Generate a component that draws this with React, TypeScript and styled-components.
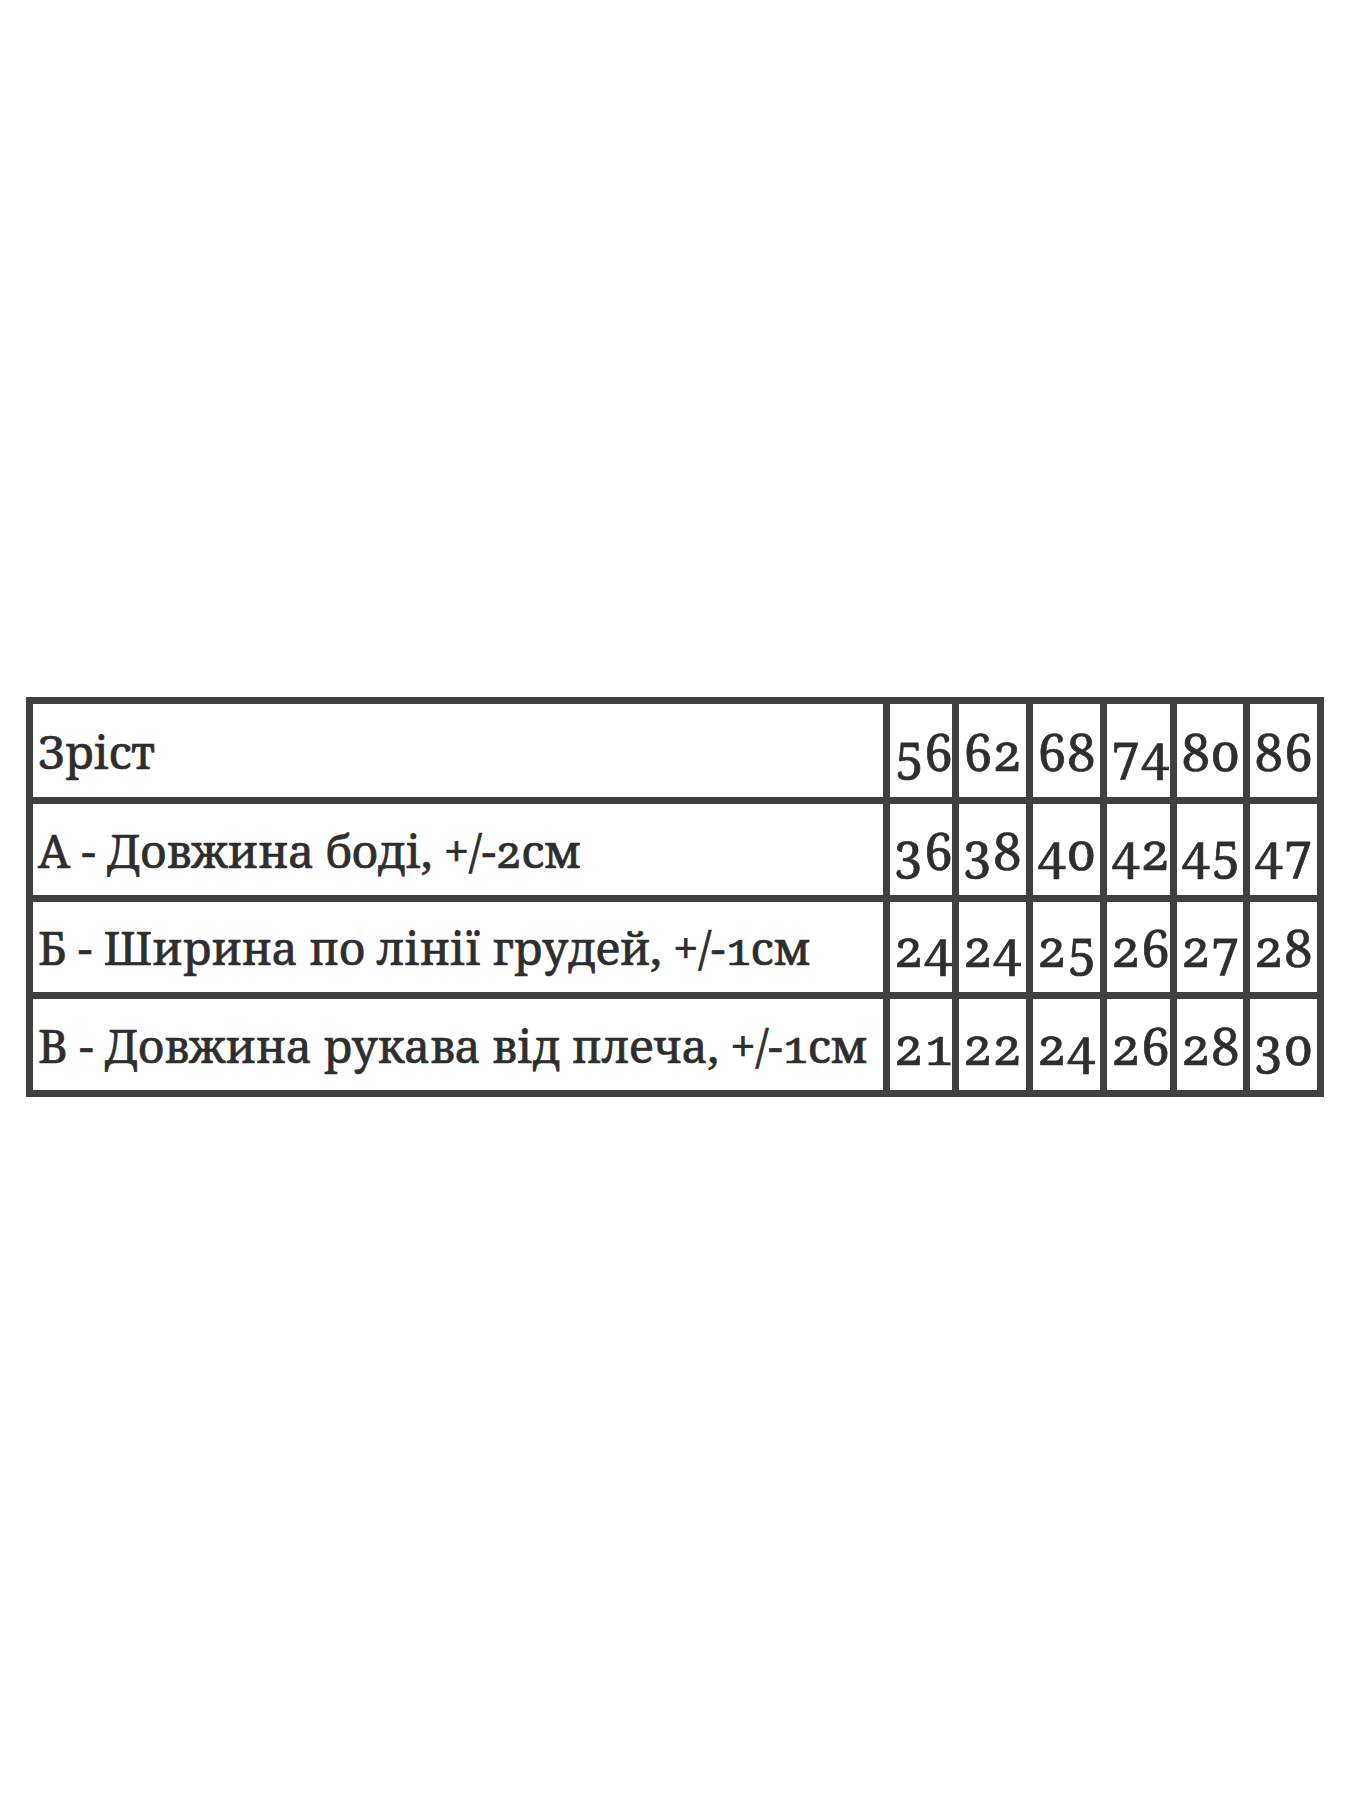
import { Fragment } from "react";
import styled, { createGlobalStyle } from "styled-components";

const Global = createGlobalStyle`
  body {
    margin: 0;
    background: #fff;
  }
`;

const Page = styled.main`
  min-height: 1800px;
  padding: 697px 0 0 26px;
  box-sizing: border-box;
`;

const SizeTable = styled.div`
  display: inline-grid;
  grid-template-columns: 850px 62px 67px 67px 63px 66px 67px;
  grid-template-rows: 93px 91px 90px 91px;
  gap: 7px;
  padding: 7px;
  background: #404040;
  font-family: "Noto Serif", "DejaVu Serif", serif;
  font-variant-numeric: oldstyle-nums;
  color: #2e2e2e;
  -webkit-text-stroke: 0.7px #2e2e2e;
`;

const Cell = styled.div<{ $num?: boolean }>`
  background: #fff;
  display: flex;
  align-items: center;
  padding-left: ${(p) => (p.$num ? "4px" : "5px")};
  font-size: ${(p) => (p.$num ? "51px" : "45.5px")};
  letter-spacing: ${(p) => (p.$num ? "0" : "-0.25px")};
  white-space: nowrap;
  overflow: hidden;
`;

const sizes = ["56", "62", "68", "74", "80", "86"];

const rows = [
  { label: "А - Довжина боді, +/-2см", values: ["36", "38", "40", "42", "45", "47"] },
  { label: "Б - Ширина по лінії грудей, +/-1см", values: ["24", "24", "25", "26", "27", "28"] },
  { label: "В - Довжина рукава від плеча, +/-1см", values: ["21", "22", "24", "26", "28", "30"] },
];

export default function App() {
  return (
    <>
      <Global />
      <Page>
        <SizeTable>
          <Cell>Зріст</Cell>
          {sizes.map((s) => (
            <Cell key={s} $num>
              {s}
            </Cell>
          ))}
          {rows.map((row) => (
            <Fragment key={row.label}>
              <Cell>{row.label}</Cell>
              {row.values.map((v, i) => (
                <Cell key={i} $num>
                  {v}
                </Cell>
              ))}
            </Fragment>
          ))}
        </SizeTable>
      </Page>
    </>
  );
}
